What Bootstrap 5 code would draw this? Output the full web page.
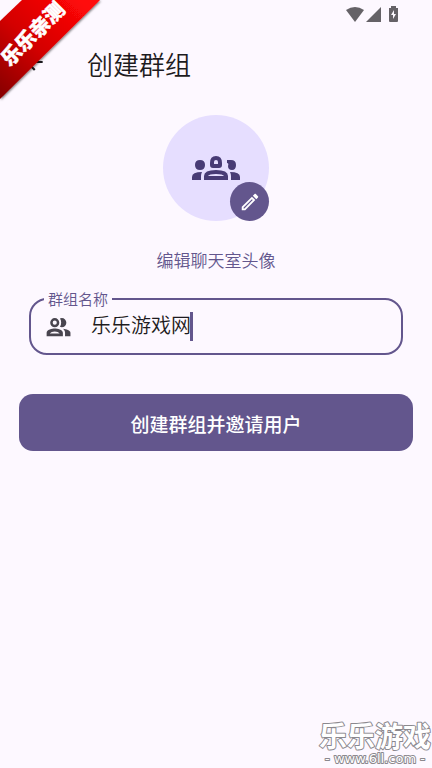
<!DOCTYPE html>
<html lang="zh-CN">
<head>
<meta charset="utf-8">
<meta name="viewport" content="width=device-width, initial-scale=1">
<title>创建群组</title>
<link href="https://cdn.jsdelivr.net/npm/bootstrap@5.3.0/dist/css/bootstrap.min.css" rel="stylesheet">
<style>
:root{--primary:#63568d;--surface:#fdf8ff;--ink:#1d1b20}
body{background:var(--surface);color:var(--ink);font-family:"Noto Sans CJK SC",sans-serif;font-weight:350}
svg{display:block}
.status-bar{height:28px;padding-right:34px}
.app-bar{height:72px;padding-left:21px;gap:40px}
.app-bar h1{font-size:26px;line-height:40px;font-weight:350}
.back-btn{color:var(--ink)}
.avatar{width:106px;height:106px;background:#e6deff;color:#483b75;margin-top:15px}
.edit-btn{width:39px;height:39px;background:var(--primary);color:#fff}
.caption-text{font-size:17px;line-height:24px;color:var(--primary);margin-top:27px}
.form-area{padding:0 19px}
.field{height:57px;margin:26px 10px 0;padding:0 14px;border:2px solid var(--primary);border-radius:18px;gap:20px}
.field label{left:13px;top:-10px;padding:0 4px;font-size:15px;line-height:18px;color:var(--primary);background:var(--surface)}
.field input{font-size:20px;line-height:26px;color:var(--ink);outline:0;font-weight:350;margin-bottom:3px}
.field svg{color:#49454f}
.caret{left:99px;top:0;width:3px;height:29px;background:var(--primary)}
.create-btn,.create-btn:hover{height:57px;margin-top:39px;padding:2px 0 0;border-radius:14px;background:var(--primary);color:#fff;font-size:19px;font-weight:500;line-height:28px}
.ribbon,.watermark{pointer-events:none}
</style>
<script src="https://cdn.jsdelivr.net/npm/bootstrap@5.3.0/dist/js/bootstrap.bundle.min.js" defer></script>
</head>
<body class="position-relative min-vh-100 d-flex flex-column">
<div class="status-bar d-flex justify-content-end align-items-center" aria-hidden="true">
  <svg width="52" height="18" viewBox="0 0 52 18" fill="#656267"><path d="M0 5Q9-1 18 5L9 17Z"/><path d="M35 2v15H20Z"/><path fill-rule="evenodd" d="M45 1h5v2h2v13q0 1-1 1h-7q-1 0-1-1V3h2ZM48 5l-3 5h2v4l3-5h-2Z"/></svg>
</div>
<header class="app-bar d-flex align-items-center">
  <button type="button" class="back-btn btn p-0 border-0 mb-1" aria-label="返回">
    <svg width="26" height="26" viewBox="0 0 24 24" fill="currentColor"><path d="M20 11H7.8l5.6-5.6L12 4l-8 8 8 8 1.4-1.4L7.8 13H20z"/></svg>
  </button>
  <h1 class="m-0">创建群组</h1>
</header>
<main>
  <div class="avatar rounded-circle mx-auto position-relative d-flex align-items-center justify-content-center">
    <svg width="48" height="24" viewBox="0 0 48 24" fill="currentColor" fill-rule="evenodd" aria-hidden="true">
      <path d="M18 7Q18 0 24 0t6 7v2q0 3-3 3H21q-3 0-3-3ZM22 8h4V6q0-2-2-2t-2 2Z"/>
      <path d="M12 24V20q0-6 12-6t12 6v4ZM16 20h16q-1-2-8-2t-8 2Z"/>
      <path d="M3 9q0-5 5-5t5 5-5 5-5-5Z"/>
      <path d="M0 24V21q0-5 10-5-1 2-1 4v4Z"/>
      <path d="M35 4h4q5 0 5 5t-4 5q-4 0-4-4 1-3-1-3Z"/>
      <path d="M48 24V21q0-5-10-5 1 2 1 4v4Z"/>
    </svg>
    <button type="button" class="edit-btn btn rounded-circle border-0 p-0 position-absolute bottom-0 end-0 d-flex align-items-center justify-content-center" aria-label="编辑头像">
      <svg width="22" height="22" viewBox="0 0 24 24" fill="currentColor"><path d="M3 17.2V21h3.8L17.8 9.9l-3.7-3.7L3 17.2zM5.9 19H5v-.9l9.1-9.1.9.9L5.9 19zM20.7 5.6l-2.3-2.3c-.4-.4-1-.4-1.4 0l-1.9 1.9 3.800 3.800 1.800-1.900c.4-.4.4-1.100 0-1.500z"/></svg>
    </button>
  </div>
  <p class="caption-text mb-0 text-center">编辑聊天室头像</p>
  <form class="form-area">
    <div class="field position-relative d-flex align-items-center">
      <label for="group-name" class="position-absolute">群组名称</label>
      <svg width="26" height="26" viewBox="0 0 24 24" fill="currentColor" aria-hidden="true"><path d="M9 13.3c-2.3 0-7.5 1.2-7.5 3.9V20.5h15v-3.3c0-2.7-5.2-3.9-7.5-3.9zM4.5 18c.8-.9 2.5-1.8 4.5-1.8s3.7.9 4.5 1.8zM9 12.2a4.2 4.2 0 1 0 0-8.4 4.2 4.2 0 0 0 0 8.4zm0-6.100a1.900 1.900 0 1 1 0 3.800 1.900 1.900 0 0 1 0-3.800zM16.500 13.600c1.200.8 2 2 2 3.600v3.300h5v-3.300c0-2-3.900-3.400-7-3.600zM15.500 12.200a4.200 4.200 0 1 0 0-8.400q-1 0-1.700.4C15.300 6 15.300 10 13.800 11.800q.8.400 1.700.4z"/></svg>
      <div class="position-relative flex-grow-1">
        <input id="group-name" type="text" class="d-block w-100 p-0 border-0 bg-transparent" value="乐乐游戏网" autocomplete="off">
        <span class="caret position-absolute" aria-hidden="true"></span>
      </div>
    </div>
    <button type="button" class="create-btn btn border-0 w-100">创建群组并邀请用户</button>
  </form>
</main>
<svg class="ribbon position-absolute top-0 start-0" width="106" height="106" viewBox="0 0 106 106" role="img" aria-label="乐乐亲测">
  <defs>
    <linearGradient id="red" gradientUnits="userSpaceOnUse" x1="0" y1="98" x2="85" y2="5"><stop offset="0" stop-color="#850000"/><stop offset=".5" stop-color="#d40000"/><stop offset="1" stop-color="#ff0808"/></linearGradient>
    <filter id="shade"><feDropShadow dx="1" dy="1" stdDeviation="1" flood-color="#000" flood-opacity=".5"/></filter>
  </defs>
  <path d="M0 21 22 0H100L0 99Z" fill="url(#red)" filter="url(#shade)"/>
  <text transform="translate(33 34) rotate(-45)" text-anchor="middle" y="7" font-size="20" font-weight="900" fill="#fff" stroke="#fff" stroke-width=".5">乐乐亲测</text>
</svg>
<svg class="watermark position-absolute bottom-0 end-0" width="114" height="60" viewBox="0 0 114 60" fill="#fff" stroke="#8b888e" stroke-width="2" stroke-linejoin="round" paint-order="stroke" text-anchor="middle">
  <text x="57" y="39" font-size="28" font-weight="700">乐乐游戏</text>
  <text x="57" y="55" font-size="13" font-family="DejaVu Sans, sans-serif" font-weight="400" stroke-width="2">- www.6ll.com -</text>
</svg>
</body>
</html>
